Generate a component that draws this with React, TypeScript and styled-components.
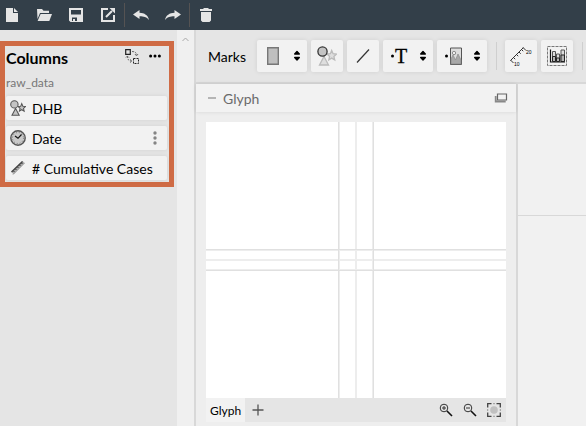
import React from "react";
import styled, { createGlobalStyle, css } from "styled-components";

const GlobalStyle = createGlobalStyle`
  * { box-sizing: border-box; }
  body { margin: 0; font-family: Lato, "Open Sans", sans-serif; font-size: 14px; color: #000; background: #f1f1f1; }
  button { font: inherit; color: inherit; border: 0; padding: 0; margin: 0; background: none; cursor: pointer; }
  svg { display: block; flex: none; }
`;

const Page = styled.div`
  min-height: 100vh;
  display: flex;
  flex-direction: column;
`;

const TopBar = styled.header`
  height: 30px;
  flex: none;
  display: flex;
  align-items: center;
  background: #333f49;
  color: #e5e5e5;
`;

const TopButton = styled.button`
  width: 24px;
  height: 28px;
  display: flex;
  align-items: center;
  justify-content: center;
`;

const TopGroup = styled.div<{ $divided?: boolean }>`
  display: flex;
  height: 24px;
  align-items: center;
  gap: 8px;
  padding-right: 4px;
  ${(p) =>
    p.$divided &&
    css`
      border-left: 1px solid #555353;
      padding-left: 4px;
    `}
`;

const Body = styled.div`
  flex: 1;
  display: flex;
`;

const Sidebar = styled.aside`
  width: 177px;
  flex: none;
  padding-top: 11px;
  background: #e5e5e5;
`;

const Dataset = styled.section`
  width: 174px;
  border: 5px solid #cf6b45;
  padding: 0 2px 2px 1px;
`;

const DatasetHeader = styled.div`
  height: 24px;
  display: flex;
  align-items: center;
  gap: 10px;
  padding-right: 6px;
`;

const Title = styled.h2`
  margin: 0;
  flex: 1;
  font-size: 16px;
  line-height: 24px;
  font-weight: 700;
`;

const HeaderActions = styled.div`
  display: flex;
  align-items: center;
  gap: 10px;
  padding-bottom: 4px;
`;

const TableName = styled.div`
  height: 26px;
  padding-top: 5px;
  font-size: 12px;
  line-height: 16px;
  color: #777;
`;

const ColumnList = styled.ul`
  margin: 0;
  padding: 0;
  list-style: none;
  display: flex;
  flex-direction: column;
  gap: 6px;
`;

const ColumnItem = styled.li`
  height: 24px;
  display: flex;
  align-items: center;
  gap: 6px;
  padding: 0 8px 0 4px;
  background: #f2f2f2;
  border-radius: 2px;
  box-shadow: 0 0 4px rgba(0, 0, 0, 0.08);
  white-space: nowrap;
`;

const ColumnName = styled.span`
  flex: 1;
  padding-top: 2px;
  font-size: 14px;
  line-height: 22px;
`;

const IconButton = styled.button`
  display: flex;
`;

const ScrollTrack = styled.div`
  width: 17px;
  flex: none;
  display: flex;
  justify-content: center;
  padding-top: 7px;
  background: #f0f0f0;
`;

const Main = styled.main`
  flex: 1;
  min-width: 0;
  display: flex;
  flex-direction: column;
  border-left: 2px solid #d8d8d8;
`;

const Toolbar = styled.div`
  height: 54px;
  flex: none;
  display: flex;
  align-items: center;
  gap: 4px;
  padding-left: 12px;
  overflow: hidden;
  background: #e5e5e5;
  border-bottom: 2px solid #d8d8d8;
`;

const ToolLabel = styled.span`
  width: 45px;
  flex: none;
  padding-top: 2px;
  font-size: 14px;
  line-height: 20px;
`;

const ToolButton = styled.button<{ $wide?: boolean }>`
  width: ${(p) => (p.$wide ? 50 : 32)}px;
  height: 32px;
  flex: none;
  display: flex;
  align-items: center;
  justify-content: ${(p) => (p.$wide ? "space-between" : "center")};
  padding: ${(p) => (p.$wide ? "0 6px 0 4px" : "0")};
  background: #f2f2f2;
  border-radius: 2px;
  box-shadow: 0 0 5px rgba(0, 0, 0, 0.09);
`;

const Separator = styled.span`
  width: 1px;
  height: 28px;
  flex: none;
  margin: 0 4px 0 5px;
  background: #cfcfcf;
`;

const Workspace = styled.div`
  flex: 1;
  display: flex;
`;

const GlyphPanel = styled.section`
  width: 322px;
  flex: none;
  display: flex;
  flex-direction: column;
  background: #eee;
  border-right: 2px solid #d8d8d8;
`;

const PanelHeader = styled.div`
  height: 28px;
  flex: none;
  display: flex;
  align-items: center;
  justify-content: space-between;
  padding: 0 8px 0 12px;
  background: #f2f2f2;
  box-shadow: 0 0 4px rgba(0, 0, 0, 0.1);
`;

const Collapse = styled.button`
  display: flex;
  align-items: center;
  gap: 7px;
  color: #6b6b6b;
  font-size: 14px;
  line-height: 26px;
`;

const CollapseLabel = styled.span`
  padding-top: 2px;
`;

const Editor = styled.div`
  flex: 1;
  display: flex;
  flex-direction: column;
  padding: 10px 10px 4px;
`;

const GlyphCanvas = styled.svg`
  width: 100%;
  height: 276px;
  flex: 1;
  background: #fff;
`;

const TabBar = styled.div`
  height: 24px;
  flex: none;
  display: flex;
  align-items: center;
  background: #e5e5e5;
`;

const Tab = styled.button`
  height: 24px;
  padding: 2px 4px 0;
  font-size: 12px;
  line-height: 22px;
  background: #f2f2f2;
`;

const AddTab = styled(IconButton)`
  margin-left: 7px;
`;

const ZoomTools = styled.div`
  margin-left: auto;
  display: flex;
  gap: 10px;
  padding-right: 5px;
`;

const ChartArea = styled.section`
  flex: 1;
  min-width: 0;
  background: #f1f1f1;
`;

const ChartHead = styled.div`
  height: 132px;
  border-bottom: 1px solid #d8d8d8;
`;

const FileIcon = () => (
  <svg width="12" height="14" viewBox="0 0 12 14" fill="currentColor">
    <path d="M0 0h7v5h5v9H0zM8 0l4 4H8z" />
  </svg>
);
const FolderIcon = () => (
  <svg width="16" height="14" viewBox="0 0 16 14" fill="currentColor">
    <path d="M1 1h5l1.5 1.7H13V5H4L1.5 11z" />
    <path d="M4.6 6H16l-2.7 7H1.6z" />
  </svg>
);
const SaveIcon = () => (
  <svg width="14" height="14" viewBox="0 0 14 14" fill="currentColor">
    <path fillRule="evenodd" d="M0 0h14v14H1.500L0 12.500zM2 2v4.500h10V2zM3 9.500V13h5V9.500z" />
    <path d="M4 11h2v2H4z" />
  </svg>
);
const ExportIcon = () => (
  <svg width="14" height="14" viewBox="0 0 14 14" fill="none" stroke="currentColor" strokeWidth="2">
    <path d="M7 1H1v12h12V7M5 9l6-6" />
    <path d="M8.500 0H14v5.500z" fill="currentColor" stroke="none" />
  </svg>
);
const ArrowIcon = ({ flip }: { flip?: boolean }) => (
  <svg width="16" height="10" viewBox="0 0 16 10" fill="currentColor">
    <path
      transform={flip ? "matrix(-1 0 0 1 16 0)" : undefined}
      d="M0 4.500L6.500 0v2.700C11.500 3 15 5 16 10 13.500 7 11 6.300 6.500 6.300V9z"
    />
  </svg>
);
const TrashIcon = () => (
  <svg width="12" height="14" viewBox="0 0 12 14" fill="currentColor">
    <path d="M4 0h4l1 1h3v2H0V1h3zM1 4h10v8.500L9.500 14h-7L1 12.500z" />
  </svg>
);
const SwapIcon = () => (
  <svg width="14" height="15" viewBox="0 0 14 15" fill="none" stroke="#222">
    <path d="M.7.7h4.600v4.600H.7z" strokeWidth="1.200" />
    <path d="M8.500 9.500h5v5h-5z" strokeDasharray="2 1" />
    <path d="M7 2.500c3 0 4.500 1 4.500 4M10 5l1.500 2L13 5M2.500 7c0 4 1.500 5 4 5M1 8.500L2.500 7 4 8.500M5 10.500L7 12l-2 1.500" stroke="#666" strokeDasharray="2 1" />
  </svg>
);
const MoreIcon = () => (
  <svg width="12" height="4" viewBox="0 0 12 4">
    <circle cx="1.600" cy="2" r="1.500" />
    <circle cx="6" cy="2" r="1.500" />
    <circle cx="10.400" cy="2" r="1.500" />
  </svg>
);
const KebabIcon = () => (
  <svg width="8" height="14" viewBox="0 0 8 14" fill="#858585">
    <circle cx="4" cy="2" r="1.700" />
    <circle cx="4" cy="7" r="1.700" />
    <circle cx="4" cy="12" r="1.700" />
  </svg>
);
const ShapesIcon = ({ size, faded }: { size: number; faded?: boolean }) => (
  <svg width={size} height={size} viewBox="0 0 20 20" strokeWidth="1.300">
    <g stroke={faded ? "#bbb" : "#555"} fill={faded ? "#dedede" : "#c4c4c4"}>
      <path d="M7 10.500l4.500 8.500h-9z" />
      <path d="M14.700 4.500l1.400 3.200 3.300.4-2.500 2.300.8 3.500-3-1.800-2.900 1.800.8-3.500-2.500-2.300 3.300-.4z" />
    </g>
    <circle cx="5.500" cy="5.500" r="4.600" fill="#c4c4c4" stroke={faded ? "#333" : "#555"} />
  </svg>
);
const ClockIcon = () => (
  <svg width="16" height="16" viewBox="0 0 16 16" fill="none" stroke="#444">
    <circle cx="8" cy="8" r="7.200" fill="#c9c9c9" stroke="#555" strokeWidth="1.400" />
    <circle cx="8" cy="8" r="5.500" stroke="#777" strokeDasharray="1 1.900" />
    <path d="M5 6L8 8.300 11.500 4.500" stroke="#111" strokeWidth="1.200" />
  </svg>
);
const RulerIcon = () => (
  <svg width="16" height="16" viewBox="0 0 16 16">
    <path d="M1.500 12L12.500 1l2.300 2L3.500 14.500z" fill="#b0b0b0" />
    <path d="M3 14.500L14.500 3" fill="none" stroke="#999" />
    <path d="M1.500 12L12.500 1.500" fill="none" stroke="#444" strokeWidth="1.500" />
    <path d="M3.500 11l1 1M5.500 9l1 1M7.500 7l1 1M9.500 5l1 1M11.500 3l1 1" stroke="#333" />
  </svg>
);
const ScrollUpIcon = () => (
  <svg width="7" height="5" viewBox="0 0 7 5" fill="none" stroke="#a8a8a8">
    <path d="M.5 4l3-3 3 3" />
  </svg>
);
const SorterIcon = () => (
  <svg width="8" height="12" viewBox="0 0 8 12">
    <path d="M4 1.500L6.300 4H1.700zM1.700 7.500h4.600L4 10z" stroke="#000" strokeLinejoin="round" strokeWidth="1.400" />
  </svg>
);
const RectIcon = () => (
  <svg width="24" height="20" viewBox="0 0 24 20">
    <path d="M6.700 1.700h10.600v16.600H6.700z" fill="#bfbfbf" stroke="#777" strokeWidth="1.400" />
  </svg>
);
const LineIcon = () => (
  <svg width="20" height="20" viewBox="0 0 20 20">
    <path d="M4 16.500L16 3.500" stroke="#333" strokeWidth="1.200" />
  </svg>
);
const TextMarkIcon = () => (
  <svg width="24" height="20" viewBox="0 0 24 20">
    <circle cx="5.500" cy="10" r="1.500" />
    <text x="8" y="17" fontFamily="Liberation Serif, serif" fontSize="20" stroke="#000" strokeWidth=".3">T</text>
  </svg>
);
const ImageMarkIcon = () => (
  <svg width="24" height="20" viewBox="0 0 24 20">
    <circle cx="5.500" cy="10" r="1.500" />
    <path d="M9.500 2h11v16.500h-11z" fill="#ddd" stroke="#555" />
    <path d="M10 18v-5l2-4 2.500 5L17 8l3 6v4z" fill="#a8a8a8" stroke="#888" strokeWidth=".7" />
    <circle cx="13" cy="7" r="1.700" fill="#eee" stroke="#777" strokeWidth=".8" />
  </svg>
);
const AxisIcon = () => (
  <svg width="24" height="22" viewBox="0 0 24 22">
    <path d="M1.500 15.500L14.500 2.500M1.500 15l3 3M14 2.500l3 3M4.500 12.500l1.700 1.700M7.500 9.500l1.700 1.700M10 7l1.700 1.700M12.500 4.500l1.700 1.700" stroke="#333" fill="none" />
    <text x="5" y="21" fontFamily="Liberation Sans, sans-serif" fontSize="5">10</text>
    <text x="17" y="9" fontFamily="Liberation Sans, sans-serif" fontSize="5">20</text>
  </svg>
);
const LegendIcon = () => (
  <svg width="20" height="20" viewBox="0 0 20 20">
    <path d="M.5.500h19v19H.5z" fill="none" stroke="#777" strokeDasharray="3 1" />
    <path d="M3.500 3.500v12.500H18" fill="none" stroke="#111" strokeWidth="1.200" />
    <path d="M5.500 5.500h3v10h-3zM9.500 8h3v7.500h-3zM14 4h3.500v11.500H14z" fill="#ddd" stroke="#555" />
    <path d="M5.500 10.500h3v5h-3zM9.500 12h3v3.500h-3zM14 9h3.500v6.500H14z" fill="#b5b5b5" stroke="#222" />
  </svg>
);
const WindowsIcon = () => (
  <svg width="14" height="10" viewBox="0 0 14 10" fill="none" stroke="#666">
    <path d="M3.500 1h9v6h-9z" strokeWidth="1.200" />
    <path d="M1.700 3v5.500h10" stroke="#888" strokeWidth="1.800" />
  </svg>
);
const MinusIcon = () => (
  <svg width="8" height="2" viewBox="0 0 8 2">
    <path d="M0 0h8v2H0z" fill="#b5b5b5" />
  </svg>
);
const PlusIcon = () => (
  <svg width="12" height="12" viewBox="0 0 12 12">
    <path d="M6 .5v11M.5 6h11" stroke="#555" strokeWidth="1.300" />
  </svg>
);
const ZoomIcon = ({ plus }: { plus?: boolean }) => (
  <svg width="14" height="14" viewBox="0 0 14 14" fill="none" stroke="#333">
    <circle cx="5" cy="5" r="3.800" />
    <path d={plus ? "M3 5h4M5 3v4" : "M3 5h4"} />
    <path d="M8 8l5 5" stroke="#111" strokeWidth="1.600" />
  </svg>
);
const FitIcon = () => (
  <svg width="14" height="14" viewBox="0 0 14 14" fill="none" stroke="#444">
    <circle cx="7" cy="7" r="3.800" fill="#c0c0c0" stroke="none" />
    <path d="M.7 4.500V.7h3.800M9.500.7h3.800v3.800M13.300 9.500v3.800H9.500M4.500 13.300H.7V9.500" strokeWidth="1.300" />
    <path d="M6 .7h2M6 13.300h2M.7 6v2M13.300 6v2" stroke="#999" />
  </svg>
);

const columns = [
  { name: "DHB", icon: <ShapesIcon size={16} />, menu: false },
  { name: "Date", icon: <ClockIcon />, menu: true },
  { name: "# Cumulative Cases", icon: <RulerIcon />, menu: false },
];

export default function App() {
  return (
    <Page>
      <GlobalStyle />
      <TopBar>
        <TopGroup>
          <TopButton aria-label="New"><FileIcon /></TopButton>
          <TopButton aria-label="Open"><FolderIcon /></TopButton>
          <TopButton aria-label="Save"><SaveIcon /></TopButton>
          <TopButton aria-label="Export"><ExportIcon /></TopButton>
        </TopGroup>
        <TopGroup $divided>
          <TopButton aria-label="Undo"><ArrowIcon /></TopButton>
          <TopButton aria-label="Redo"><ArrowIcon flip /></TopButton>
        </TopGroup>
        <TopGroup $divided>
          <TopButton aria-label="Delete"><TrashIcon /></TopButton>
        </TopGroup>
      </TopBar>
      <Body>
        <Sidebar>
          <Dataset>
            <DatasetHeader>
              <Title>Columns</Title>
              <HeaderActions>
                <IconButton aria-label="Replace data"><SwapIcon /></IconButton>
                <IconButton aria-label="More"><MoreIcon /></IconButton>
              </HeaderActions>
            </DatasetHeader>
            <TableName>raw_data</TableName>
            <ColumnList>
              {columns.map((c) => (
                <ColumnItem key={c.name}>
                  {c.icon}
                  <ColumnName>{c.name}</ColumnName>
                  {c.menu && <IconButton aria-label="Column options"><KebabIcon /></IconButton>}
                </ColumnItem>
              ))}
            </ColumnList>
          </Dataset>
        </Sidebar>
        <ScrollTrack><ScrollUpIcon /></ScrollTrack>
        <Main>
          <Toolbar>
            <ToolLabel>Marks</ToolLabel>
            <ToolButton $wide aria-label="Rectangle"><RectIcon /><SorterIcon /></ToolButton>
            <ToolButton aria-label="Symbol"><ShapesIcon size={20} faded /></ToolButton>
            <ToolButton aria-label="Line"><LineIcon /></ToolButton>
            <ToolButton $wide aria-label="Text"><TextMarkIcon /><SorterIcon /></ToolButton>
            <ToolButton $wide aria-label="Image"><ImageMarkIcon /><SorterIcon /></ToolButton>
            <Separator />
            <ToolButton aria-label="Data axis"><AxisIcon /></ToolButton>
            <ToolButton aria-label="Legend"><LegendIcon /></ToolButton>
            <Separator />
          </Toolbar>
          <Workspace>
            <GlyphPanel>
              <PanelHeader>
                <Collapse><MinusIcon /><CollapseLabel>Glyph</CollapseLabel></Collapse>
                <IconButton aria-label="Pop out"><WindowsIcon /></IconButton>
              </PanelHeader>
              <Editor>
                <GlyphCanvas viewBox="0 0 300 276" fill="none">
                  <path d="M0 128h300M0 138h300M0 148h300M133 0v276M150 0v276M167 0v276" stroke="#ededed" strokeWidth="2" />
                  <path d="M0 127.500h300M0 148.500h300M132.500 0v276M167.500 0v276" stroke="#e0e0e0" />
                </GlyphCanvas>
                <TabBar>
                  <Tab>Glyph</Tab>
                  <AddTab aria-label="Add glyph"><PlusIcon /></AddTab>
                  <ZoomTools>
                    <IconButton aria-label="Zoom in"><ZoomIcon plus /></IconButton>
                    <IconButton aria-label="Zoom out"><ZoomIcon /></IconButton>
                    <IconButton aria-label="Fit"><FitIcon /></IconButton>
                  </ZoomTools>
                </TabBar>
              </Editor>
            </GlyphPanel>
            <ChartArea><ChartHead /></ChartArea>
          </Workspace>
        </Main>
      </Body>
    </Page>
  );
}
